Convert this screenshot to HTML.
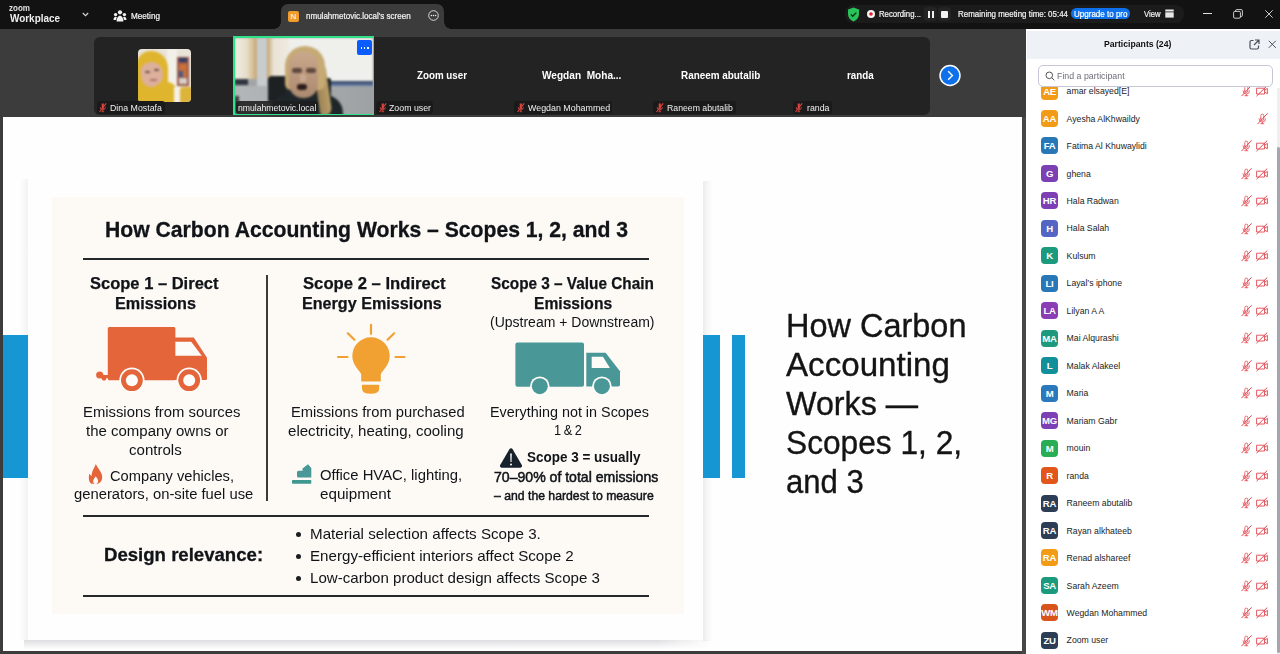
<!DOCTYPE html>
<html><head><meta charset="utf-8">
<style>
*{margin:0;padding:0;box-sizing:border-box}
html,body{width:1280px;height:654px;overflow:hidden;background:#3c3c3c;font-family:"Liberation Sans",sans-serif}
.a{position:absolute}
.nw{white-space:nowrap}
svg{position:absolute;overflow:visible}
#top{left:0;top:0;width:1280px;height:29px;background:#121212}
#strip{left:94px;top:37px;width:836px;height:78px;background:#232323;border-radius:6px}
#screen{left:3px;top:117px;width:1019px;height:534px;background:#fefefe}
#panel{left:1026px;top:29px;width:254px;height:625px;background:#fff}
.lbl{position:absolute;top:101px;height:13px;background:#1a1a1a;border-radius:3px}
.row{position:absolute;left:0;width:1280px;height:17px}
.av{position:absolute;left:1041px;top:0;width:17px;height:17px;border-radius:4px;color:#fff;font-size:9.6px;font-weight:700;text-align:center;line-height:17px;letter-spacing:-0.3px}
.nm{position:absolute;left:1066.6px;top:3.6px;font-size:8.7px;line-height:10px;color:#1c1c1c;white-space:nowrap}
.mic,.cam{top:2.7px}
.rule{position:absolute;background:#25282b;height:2px}
</style></head><body>
<svg width="0" height="0" style="position:absolute">
 <defs>
  <g id="micoff" fill="none" stroke="#e2474f" stroke-width="0.8" stroke-linecap="round">
    <path d="M3.8 6V2.6a1.5 1.5 0 0 1 3 0V6a1.5 1.5 0 0 1-3 0z"/>
    <path d="M2 5.8a3.3 3.3 0 0 0 6.6 0M5.3 9.2v1.5M3.8 10.7h3"/>
    <path d="M0.8 10.8L10.3 0.6" stroke-width="1"/>
  </g>
  <g id="camoff" fill="none" stroke="#e2474f" stroke-width="0.9" stroke-linecap="round" stroke-linejoin="round">
    <path d="M1 3.2h7.6v5.8H1z"/>
    <path d="M8.6 5.2l2.8-1.8v5.4l-2.8-1.8"/>
    <path d="M0.8 10.9L11 0.8" stroke-width="1"/>
  </g>
  <g id="smic" fill="#d9443f">
    <path d="M2.7 0.5h2.2v4.8a1.1 1.1 0 0 1-2.2 0z"/>
    <path d="M1.2 4.2a2.6 2.6 0 0 0 5.2 0" fill="none" stroke="#d9443f" stroke-width="0.9"/>
    <path d="M3.8 7.1v1.6M2.5 8.7h2.6" stroke="#d9443f" stroke-width="0.9"/>
    <path d="M0.5 9L7.2 0.3" stroke="#d9443f" stroke-width="1.1"/>
  </g>
 </defs>
</svg>

<!-- ================= TOP BAR ================= -->
<div id="top" class="a">
  <svg style="left:82px;top:12px" width="7" height="5"><path d="M0.8 1l2.7 2.7L6.2 1" fill="none" stroke="#d8d8d8" stroke-width="1.1"/></svg>
  <svg style="left:113px;top:9px" width="14" height="14" viewBox="0 0 14 14" fill="#f2f2f2">
    <circle cx="7" cy="3.3" r="2.1"/><circle cx="2.6" cy="5.6" r="1.7"/><circle cx="11.4" cy="5.6" r="1.7"/>
    <path d="M3.6 12.5c0-3.3 1.4-5.8 3.4-5.8s3.4 2.5 3.4 5.8z"/>
    <path d="M0.5 11c0-2 0.8-3.3 2.1-3.3 0.6 0 1 0.2 1.3 0.5-0.5 1-0.8 2-0.8 2.8z"/>
    <path d="M13.5 11c0-2-0.8-3.3-2.1-3.3-0.6 0-1 0.2-1.3 0.5 0.5 1 0.8 2 0.8 2.8z"/>
  </svg>
  <!-- tab -->
  <div class="a" style="left:281px;top:4px;width:163px;height:25px;background:#3c3c3c;border-radius:7px 7px 0 0"></div>
  <div class="a" style="left:274px;top:22px;width:7px;height:7px;background:radial-gradient(circle at 0 0,#121212 6.5px,#3c3c3c 7px)"></div>
  <div class="a" style="left:444px;top:22px;width:7px;height:7px;background:radial-gradient(circle at 100% 0,#121212 6.5px,#3c3c3c 7px)"></div>
  <div class="a" style="left:288px;top:11px;width:11px;height:11px;background:#f09e2a;border-radius:2px;color:#fff;font-size:8px;line-height:11px;text-align:center">N</div>
  <svg style="left:428px;top:10px" width="11" height="11" viewBox="0 0 11 11"><circle cx="5.5" cy="5.5" r="4.8" fill="none" stroke="#e8e8e8" stroke-width="0.9"/><circle cx="3.4" cy="5.6" r="0.75" fill="#eee"/><circle cx="5.5" cy="5.6" r="0.75" fill="#eee"/><circle cx="7.6" cy="5.6" r="0.75" fill="#eee"/></svg>
  <!-- right pill -->
  <div class="a" style="left:845px;top:5px;width:339px;height:18px;background:#1b1b1b;border-radius:8px"></div>
  <svg style="left:847px;top:7px" width="13" height="15" viewBox="0 0 13 15"><path d="M6.5 0.5L12 2.6v4.3c0 3.6-2.4 6.2-5.5 7.6C3.4 13.1 1 10.5 1 6.9V2.6z" fill="#27c25a"/><path d="M3.8 7.4l1.9 1.9 3.6-3.7" fill="none" stroke="#0f2a14" stroke-width="1.3"/></svg>
  <svg style="left:866px;top:9px" width="10" height="10" viewBox="0 0 10 10"><circle cx="5" cy="5" r="4" fill="#f4f4f4"/><circle cx="5" cy="5" r="1.8" fill="#e0242c"/></svg>
  <div class="a" style="left:924px;top:7px;width:13px;height:14px;background:#242424;border-radius:4px"></div>
  <div class="a" style="left:927.8px;top:10.6px;width:2px;height:7px;background:#f2f2f2"></div>
  <div class="a" style="left:931.6px;top:10.6px;width:2px;height:7px;background:#f2f2f2"></div>
  <div class="a" style="left:938px;top:7px;width:13px;height:14px;background:#242424;border-radius:4px"></div>
  <div class="a" style="left:940.5px;top:10.5px;width:7.5px;height:7.5px;background:#f2f2f2;border-radius:1px"></div>
  <div class="a" style="left:1071px;top:7.7px;width:59px;height:11.6px;background:#0e71eb;border-radius:6px"></div>
  <svg style="left:1165px;top:9px" width="9" height="9" viewBox="0 0 9 9" fill="#e8e8e8"><rect x="0.3" y="0.5" width="8.4" height="2"/><rect x="0.3" y="3.3" width="8.4" height="5.3"/></svg>
  <div class="a" style="left:1203px;top:13px;width:8.5px;height:1px;background:#e0e0e0"></div>
  <svg style="left:1233px;top:9px" width="10" height="10" viewBox="0 0 10 10" fill="none" stroke="#e0e0e0" stroke-width="0.9"><rect x="0.6" y="2.4" width="6.8" height="6.8" rx="1.2"/><path d="M2.5 2.4V1.8a1.2 1.2 0 0 1 1.2-1.2h4.5a1.2 1.2 0 0 1 1.2 1.2v4.5a1.2 1.2 0 0 1-1.2 1.2H7.4"/></svg>
  <svg style="left:1264.5px;top:9.5px" width="8" height="8" viewBox="0 0 8 8" fill="none" stroke="#e0e0e0" stroke-width="0.9"><path d="M0.3 0.3l7.4 7.4M7.7 0.3l-7.4 7.4"/></svg>
</div>

<!-- ================= STRIP ================= -->
<div id="strip" class="a"></div>
<!-- Dina photo -->
<div class="a" style="left:138px;top:49px;width:53px;height:53px;border-radius:4px;overflow:hidden;background:#e9e3d8">
 <div class="a" style="left:0;top:0;width:53px;height:53px;filter:blur(0.8px)">
  <div class="a" style="left:29px;top:0;width:10px;height:53px;background:#f3f0ea"></div>
  <div class="a" style="left:39px;top:8px;width:12px;height:29px;background:#9a5a48"></div>
  <div class="a" style="left:41px;top:9px;width:8px;height:4px;background:#2e3c6a"></div>
  <div class="a" style="left:41px;top:15px;width:8px;height:13px;background:#c8703c"></div>
  <div class="a" style="left:41px;top:22px;width:4px;height:6px;background:#4a5a8a"></div>
  <div class="a" style="left:41px;top:29px;width:8px;height:6px;background:#d8d0c8"></div>
  <div class="a" style="left:-2px;top:2px;width:32px;height:60px;background:#dfb52e;border-radius:15px 17px 2px 2px"></div>
  <div class="a" style="left:3px;top:13px;width:22px;height:25px;background:#dcb09a;border-radius:9px 11px 12px 10px;transform:rotate(-8deg)"></div>
  <div class="a" style="left:7px;top:22px;width:5px;height:2px;background:#6a5048;border-radius:1px"></div>
  <div class="a" style="left:16px;top:20px;width:5px;height:2px;background:#6a5048;border-radius:1px"></div>
  <div class="a" style="left:12px;top:30px;width:7px;height:2px;background:#b0706a;border-radius:1px"></div>
  <div class="a" style="left:14px;top:33px;width:26px;height:24px;background:#dfb52e;border-radius:14px 12px 0 0;transform:rotate(-12deg)"></div>
  <div class="a" style="left:36px;top:38px;width:8px;height:16px;background:#f4f1ea"></div>
  <div class="a" style="left:42px;top:38px;width:12px;height:16px;background:#dcb43a;border-radius:3px 0 0 0"></div>
 </div>
</div>
<div class="lbl" style="left:97px;width:68px"></div>
<svg style="left:99px;top:102.5px" width="8" height="10" viewBox="0 0 8 10"><use href="#smic"/></svg>
<!-- Active speaker video -->
<div class="a" style="left:233px;top:36px;width:141px;height:79px;background:#2fe28a"></div>
<div class="a" style="left:234.5px;top:37.5px;width:138px;height:76px;overflow:hidden;background:#a2a5a7">
 <div class="a" style="left:0;top:0;width:138px;height:76px;filter:blur(0.9px)">
  <div class="a" style="left:54px;top:0;width:84px;height:44px;background:#efefec"></div>
  <div class="a" style="left:0;top:0;width:22px;height:41px;background:linear-gradient(90deg,#f1ede4,#e6dcc8 55%,#c6a872)"></div>
  <div class="a" style="left:22px;top:0;width:10px;height:48px;background:#c9cccd"></div>
  <div class="a" style="left:32px;top:0;width:22px;height:41px;background:linear-gradient(90deg,#c3a26c,#e9e3d6 30%,#efebe2)"></div>
  <div class="a" style="left:0;top:41px;width:13px;height:6px;background:#2f3540"></div>
  <div class="a" style="left:95px;top:43px;width:43px;height:6px;background:linear-gradient(180deg,#33405a,#6f8fbf)"></div>
  <div class="a" style="left:0;top:48px;width:138px;height:28px;background:linear-gradient(90deg,#b4b7b9,#9ea1a3)"></div>
  <div class="a" style="left:0;top:58px;width:4px;height:18px;background:#3a3d40"></div>
  <div class="a" style="left:33px;top:38px;width:21px;height:26px;background:#1d2123;border-radius:4px 2px 0 0"></div>
  <div class="a" style="left:89px;top:40px;width:7px;height:22px;background:#1d2123;border-radius:2px"></div>
  <div class="a" style="left:34px;top:57px;width:74px;height:22px;background:#1f262a;border-radius:18px 18px 0 0"></div>
  <div class="a" style="left:50px;top:48px;width:40px;height:14px;background:#1f262a"></div>
  <div class="a" style="left:82px;top:28px;width:12px;height:50px;background:linear-gradient(90deg,#9c8256,#bca068);border-radius:8px 4px 10px 6px;transform:rotate(-8deg)"></div>
  <div class="a" style="left:50px;top:8px;width:40px;height:44px;background:#c6aa74;border-radius:20px 20px 6px 6px"></div>
  <div class="a" style="left:54px;top:14px;width:29px;height:46px;background:linear-gradient(180deg,#c8a88c,#b8957a 60%,#a98a70);border-radius:13px 12px 14px 14px"></div>
  <div class="a" style="left:57px;top:30px;width:10px;height:5px;background:#4e3a32;border-radius:3px;opacity:.85"></div>
  <div class="a" style="left:71px;top:30px;width:10px;height:5px;background:#4e3a32;border-radius:3px;opacity:.85"></div>
  <div class="a" style="left:65px;top:36px;width:6px;height:8px;background:#c9a98e;border-radius:3px"></div>
  <div class="a" style="left:62px;top:46px;width:10px;height:6px;background:#2c1c1a;border-radius:5px"></div>
 </div>
</div>
<div class="a" style="left:357px;top:40px;width:15px;height:15px;background:#0b5cff;border-radius:2px"></div>
<div class="a" style="left:360.5px;top:47px;width:1.5px;height:1.5px;background:#fff"></div>
<div class="a" style="left:363.8px;top:47px;width:1.5px;height:1.5px;background:#fff"></div>
<div class="a" style="left:367px;top:47px;width:1.5px;height:1.5px;background:#fff"></div>
<div class="lbl" style="left:236px;width:82px;background:rgba(30,30,30,0.88)"></div>
<!-- other labels -->
<div class="lbl" style="left:376px;width:57px"></div>
<svg style="left:378.5px;top:102.5px" width="8" height="10" viewBox="0 0 8 10"><use href="#smic"/></svg>
<div class="lbl" style="left:514.4px;width:98px"></div>
<svg style="left:517px;top:102.5px" width="8" height="10" viewBox="0 0 8 10"><use href="#smic"/></svg>
<div class="lbl" style="left:653px;width:83px"></div>
<svg style="left:655.5px;top:102.5px" width="8" height="10" viewBox="0 0 8 10"><use href="#smic"/></svg>
<div class="lbl" style="left:792.5px;width:39px"></div>
<svg style="left:795px;top:102.5px" width="8" height="10" viewBox="0 0 8 10"><use href="#smic"/></svg>
<!-- arrow -->
<svg style="left:938px;top:64px" width="24" height="24" viewBox="0 0 24 24"><circle cx="12" cy="11.5" r="10.7" fill="#fff"/><circle cx="12" cy="11.5" r="9.2" fill="#0e71eb"/><path d="M10.2 7.3l4.2 4.2-4.2 4.2" fill="none" stroke="#fff" stroke-width="1.4"/></svg>

<!-- ================= SHARED SCREEN ================= -->
<div id="screen" class="a"></div>
<div class="a" style="left:1022px;top:117px;width:4px;height:537px;background:#474747"></div>
<!-- card -->
<div class="a" style="left:20px;top:179px;width:8px;height:461px;background:linear-gradient(90deg,#fdfdfe,#f3f3f5)"></div>
<div class="a" style="left:703px;top:181px;width:9px;height:460px;background:linear-gradient(90deg,#ececee,#f6f6f7 50%,#fdfdfd)"></div>
<div class="a" style="left:24px;top:640px;width:688px;height:9px;background:linear-gradient(180deg,#dedee0,#ececee 45%,#f8f8f9 85%,#fefefe);-webkit-mask-image:linear-gradient(90deg,#000 92%,transparent)"></div>
<div class="a" style="left:28px;top:179px;width:675px;height:461px;background:#fefefe"></div>
<div class="a" style="left:52px;top:197px;width:632px;height:417px;background:#fdfaf6"></div>
<!-- blue bars -->
<div class="a" style="left:3px;top:335px;width:25px;height:143px;background:#1796d4"></div>
<div class="a" style="left:703px;top:335px;width:16.5px;height:143px;background:#1796d4"></div>
<div class="a" style="left:732px;top:335px;width:13px;height:143px;background:#1796d4"></div>
<div class="rule" style="left:83px;top:258px;width:566px"></div>
<div class="rule" style="left:83px;top:515px;width:566px"></div>
<div class="rule" style="left:83px;top:595px;width:566px"></div>
<div class="a" style="left:266.2px;top:275px;width:1.8px;height:226px;background:#3a3a3a"></div>
<!-- truck 1 -->
<svg style="left:90px;top:320px" width="125" height="75" viewBox="0 0 125 75">
  <rect x="17.8" y="7.1" width="67.6" height="53.1" rx="1.5" fill="#e4653a"/>
  <path d="M84.6 17.4H103.8L117 37.8V58.5a1.5 1.5 0 0 1-1.5 1.5H84.6z" fill="#e4653a"/>
  <path d="M85.4 21.8H101.2L111.8 35.8H85.4z" fill="#fefcf9"/>
  <path d="M9 56.5H20" stroke="#e4653a" stroke-width="3"/>
  <circle cx="9.7" cy="55" r="3.6" fill="#e4653a"/>
  <circle cx="14" cy="58.3" r="2.4" fill="#e4653a"/>
  <circle cx="41.9" cy="60.2" r="12.6" fill="#fefcf9"/>
  <circle cx="41.9" cy="60.2" r="10.9" fill="#e4653a"/>
  <circle cx="41.9" cy="60.2" r="6" fill="#fefcf9"/>
  <circle cx="99.2" cy="60.2" r="12.6" fill="#fefcf9"/>
  <circle cx="99.2" cy="60.2" r="10.9" fill="#e4653a"/>
  <circle cx="99.2" cy="60.2" r="6" fill="#fefcf9"/>
</svg>
<!-- bulb -->
<svg style="left:330px;top:318px" width="80" height="80" viewBox="0 0 80 80">
  <path d="M22.3 38A18.7 18.7 0 1 1 59.7 38C59.7 46 54 51 50.8 56V63.6H31.2V56C28 51 22.3 46 22.3 38z" fill="#f0a132"/>
  <path d="M32 66.7H49.2V70.5Q49.2 75.8 40.6 75.8Q32 75.8 32 70.5z" fill="#f0a132"/>
  <g stroke="#f0a132" stroke-width="2.2" stroke-linecap="round"><path d="M41 6.8V15.8M17.8 15.3L24.4 21.8M64.2 15.3L57.6 21.8M8 39H17.5M65.5 39H74.5"/></g>
</svg>
<!-- truck 3 -->
<svg style="left:505px;top:330px" width="125" height="70" viewBox="0 0 125 70">
  <rect x="10.4" y="12.6" width="68.6" height="44.1" rx="2" fill="#4a9797"/>
  <path d="M81.3 22.7H100.6L115 41.2V54.5a2 2 0 0 1-2 2H81.3z" fill="#4a9797"/>
  <path d="M86.7 26.8H98L104.9 38H86.7z" fill="#fefcf9"/>
  <circle cx="34.8" cy="56.2" r="9.8" fill="#fefcf9"/><circle cx="34.8" cy="56.2" r="8" fill="#4a9797"/>
  <circle cx="96.9" cy="56.2" r="9.8" fill="#fefcf9"/><circle cx="96.9" cy="56.2" r="8" fill="#4a9797"/>
</svg>
<!-- flame -->
<svg style="left:80px;top:455px" width="40" height="40" viewBox="0 0 40 40">
  <path d="M15.8 8.9C17.5 13 20.5 15.5 21.8 19.5C23 23.5 21.5 27.5 18 28.7C13.5 28.9 10.5 28.9 11.5 28.7C8.5 27 8.5 23 9.3 18.5C10.3 20 11 20.8 11.6 21C11.5 16.5 14 13.5 15.8 8.9z" fill="#e4653a"/>
  <path d="M15.6 21.5C17.3 23 18.5 25 18 27C17.5 28.6 16.2 29 15.6 29C14.5 29 13.3 28.4 13.2 26.8C13 24.8 14.5 23 15.6 21.5z" fill="#fefcf9"/>
</svg>
<!-- hvac -->
<svg style="left:285px;top:455px" width="40" height="40" viewBox="0 0 40 40">
  <path d="M12 17.2a1.5 1.5 0 0 1 1.5-1.5H17.5V13.5L23 9.2L26.3 13V22.6H13.5a1.5 1.5 0 0 1-1.5-1.5z" fill="#4a9797"/>
  <rect x="7" y="25" width="19.3" height="3.7" rx="0.8" fill="#3f9890"/>
</svg>
<!-- warning -->
<svg style="left:490px;top:440px" width="40" height="40" viewBox="0 0 40 40">
  <path d="M19.4 9.2a1.9 1.9 0 0 1 3.2 0L31.8 25a1.9 1.9 0 0 1-1.6 2.8H11.8A1.9 1.9 0 0 1 10.2 25z" fill="#17212b"/>
  <path d="M20.2 13.5H21.8L21.5 22H20.5z" fill="#fff"/><circle cx="21" cy="24.4" r="1" fill="#fff"/>
</svg>
<!-- bullets -->
<div class="a" style="left:295.5px;top:531.8px;width:5px;height:5px;border-radius:50%;background:#1a1e22"></div>
<div class="a" style="left:295.5px;top:553.6px;width:5px;height:5px;border-radius:50%;background:#1a1e22"></div>
<div class="a" style="left:295.5px;top:575.6px;width:5px;height:5px;border-radius:50%;background:#1a1e22"></div>

<!-- ================= PANEL ================= -->
<div id="panel" class="a"></div>
<div class="a" style="left:1027px;top:31px;width:253px;height:28px;background:#eef2f6"></div>
<svg style="left:1249px;top:38.5px" width="11" height="11" viewBox="0 0 11 11" fill="none" stroke="#4b505c" stroke-width="1.2"><path d="M4.5 1.5H2.5a1.5 1.5 0 0 0-1.5 1.5v5.5a1.5 1.5 0 0 0 1.5 1.5H8a1.5 1.5 0 0 0 1.5-1.5V6.5M6 1H10V5M10 1L5 6"/></svg>
<svg style="left:1268px;top:40px" width="9" height="9" viewBox="0 0 9 9" fill="none" stroke="#4b505c" stroke-width="1"><path d="M0.8 0.8l7 7M7.8 0.8l-7 7"/></svg>
<div class="a" style="left:1277px;top:88px;width:3px;height:566px;background:#efefef"></div>
<div class="a" style="left:1277px;top:147px;width:3px;height:506px;background:#a6a6ae;border-radius:2px"></div>
<div class="a" style="left:0;top:87px;width:1276px;height:567px;overflow:hidden">
 <div class="a" style="left:0;top:-87px;width:1280px;height:654px">
<div class='row a' style='top:82.50px'><div class='av' style='background:#f29b17'>AE</div><div class='nm'>amar elsayed[E]</div><svg class='mic' style='left:1241px' width='11' height='12' viewBox='0 0 11 12'><use href='#micoff'/></svg><svg class='cam' style='left:1256px' width='13' height='12' viewBox='0 0 13 12'><use href='#camoff'/></svg></div>
<div class='row a' style='top:109.97px'><div class='av' style='background:#f29b17'>AA</div><div class='nm'>Ayesha AlKhwaildy</div><svg class='mic' style='left:1257px' width='12' height='12' viewBox='0 0 12 12'><use href='#micoff'/></svg></div>
<div class='row a' style='top:137.44px'><div class='av' style='background:#2878b8'>FA</div><div class='nm'>Fatima Al Khuwaylidi</div><svg class='mic' style='left:1241px' width='11' height='12' viewBox='0 0 11 12'><use href='#micoff'/></svg><svg class='cam' style='left:1256px' width='13' height='12' viewBox='0 0 13 12'><use href='#camoff'/></svg></div>
<div class='row a' style='top:164.91px'><div class='av' style='background:#7c3fb4'>G</div><div class='nm'>ghena</div><svg class='mic' style='left:1241px' width='11' height='12' viewBox='0 0 11 12'><use href='#micoff'/></svg><svg class='cam' style='left:1256px' width='13' height='12' viewBox='0 0 13 12'><use href='#camoff'/></svg></div>
<div class='row a' style='top:192.38px'><div class='av' style='background:#7c3fb4'>HR</div><div class='nm'>Hala Radwan</div><svg class='mic' style='left:1241px' width='11' height='12' viewBox='0 0 11 12'><use href='#micoff'/></svg><svg class='cam' style='left:1256px' width='13' height='12' viewBox='0 0 13 12'><use href='#camoff'/></svg></div>
<div class='row a' style='top:219.85px'><div class='av' style='background:#5466c4'>H</div><div class='nm'>Hala Salah</div><svg class='mic' style='left:1241px' width='11' height='12' viewBox='0 0 11 12'><use href='#micoff'/></svg><svg class='cam' style='left:1256px' width='13' height='12' viewBox='0 0 13 12'><use href='#camoff'/></svg></div>
<div class='row a' style='top:247.32px'><div class='av' style='background:#1b9a7d'>K</div><div class='nm'>Kulsum</div><svg class='mic' style='left:1241px' width='11' height='12' viewBox='0 0 11 12'><use href='#micoff'/></svg><svg class='cam' style='left:1256px' width='13' height='12' viewBox='0 0 13 12'><use href='#camoff'/></svg></div>
<div class='row a' style='top:274.79px'><div class='av' style='background:#2878b8'>LI</div><div class='nm'>Layal’s iphone</div><svg class='mic' style='left:1241px' width='11' height='12' viewBox='0 0 11 12'><use href='#micoff'/></svg><svg class='cam' style='left:1256px' width='13' height='12' viewBox='0 0 13 12'><use href='#camoff'/></svg></div>
<div class='row a' style='top:302.26px'><div class='av' style='background:#8b3db5'>LA</div><div class='nm'>Lilyan A A</div><svg class='mic' style='left:1241px' width='11' height='12' viewBox='0 0 11 12'><use href='#micoff'/></svg><svg class='cam' style='left:1256px' width='13' height='12' viewBox='0 0 13 12'><use href='#camoff'/></svg></div>
<div class='row a' style='top:329.73px'><div class='av' style='background:#1d9a7d'>MA</div><div class='nm'>Mai Alqurashi</div><svg class='mic' style='left:1241px' width='11' height='12' viewBox='0 0 11 12'><use href='#micoff'/></svg><svg class='cam' style='left:1256px' width='13' height='12' viewBox='0 0 13 12'><use href='#camoff'/></svg></div>
<div class='row a' style='top:357.20px'><div class='av' style='background:#12909a'>L</div><div class='nm'>Malak Alakeel</div><svg class='mic' style='left:1241px' width='11' height='12' viewBox='0 0 11 12'><use href='#micoff'/></svg><svg class='cam' style='left:1256px' width='13' height='12' viewBox='0 0 13 12'><use href='#camoff'/></svg></div>
<div class='row a' style='top:384.67px'><div class='av' style='background:#2b79bd'>M</div><div class='nm'>Maria</div><svg class='mic' style='left:1241px' width='11' height='12' viewBox='0 0 11 12'><use href='#micoff'/></svg><svg class='cam' style='left:1256px' width='13' height='12' viewBox='0 0 13 12'><use href='#camoff'/></svg></div>
<div class='row a' style='top:412.14px'><div class='av' style='background:#7c3fb4'>MG</div><div class='nm'>Mariam Gabr</div><svg class='mic' style='left:1241px' width='11' height='12' viewBox='0 0 11 12'><use href='#micoff'/></svg><svg class='cam' style='left:1256px' width='13' height='12' viewBox='0 0 13 12'><use href='#camoff'/></svg></div>
<div class='row a' style='top:439.61px'><div class='av' style='background:#28ad55'>M</div><div class='nm'>mouin</div><svg class='mic' style='left:1241px' width='11' height='12' viewBox='0 0 11 12'><use href='#micoff'/></svg><svg class='cam' style='left:1256px' width='13' height='12' viewBox='0 0 13 12'><use href='#camoff'/></svg></div>
<div class='row a' style='top:467.08px'><div class='av' style='background:#e2561b'>R</div><div class='nm'>randa</div><svg class='mic' style='left:1241px' width='11' height='12' viewBox='0 0 11 12'><use href='#micoff'/></svg><svg class='cam' style='left:1256px' width='13' height='12' viewBox='0 0 13 12'><use href='#camoff'/></svg></div>
<div class='row a' style='top:494.55px'><div class='av' style='background:#2c3d55'>RA</div><div class='nm'>Raneem abutalib</div><svg class='mic' style='left:1241px' width='11' height='12' viewBox='0 0 11 12'><use href='#micoff'/></svg><svg class='cam' style='left:1256px' width='13' height='12' viewBox='0 0 13 12'><use href='#camoff'/></svg></div>
<div class='row a' style='top:522.02px'><div class='av' style='background:#2c3d55'>RA</div><div class='nm'>Rayan alkhateeb</div><svg class='mic' style='left:1241px' width='11' height='12' viewBox='0 0 11 12'><use href='#micoff'/></svg><svg class='cam' style='left:1256px' width='13' height='12' viewBox='0 0 13 12'><use href='#camoff'/></svg></div>
<div class='row a' style='top:549.49px'><div class='av' style='background:#f29b17'>RA</div><div class='nm'>Renad alshareef</div><svg class='mic' style='left:1241px' width='11' height='12' viewBox='0 0 11 12'><use href='#micoff'/></svg><svg class='cam' style='left:1256px' width='13' height='12' viewBox='0 0 13 12'><use href='#camoff'/></svg></div>
<div class='row a' style='top:576.96px'><div class='av' style='background:#1b9a7d'>SA</div><div class='nm'>Sarah Azeem</div><svg class='mic' style='left:1241px' width='11' height='12' viewBox='0 0 11 12'><use href='#micoff'/></svg><svg class='cam' style='left:1256px' width='13' height='12' viewBox='0 0 13 12'><use href='#camoff'/></svg></div>
<div class='row a' style='top:604.43px'><div class='av' style='background:#d9541a'>WM</div><div class='nm'>Wegdan Mohammed</div><svg class='mic' style='left:1241px' width='11' height='12' viewBox='0 0 11 12'><use href='#micoff'/></svg><svg class='cam' style='left:1256px' width='13' height='12' viewBox='0 0 13 12'><use href='#camoff'/></svg></div>
<div class='row a' style='top:631.90px'><div class='av' style='background:#2c3d55'>ZU</div><div class='nm'>Zoom user</div><svg class='mic' style='left:1241px' width='11' height='12' viewBox='0 0 11 12'><use href='#micoff'/></svg><svg class='cam' style='left:1256px' width='13' height='12' viewBox='0 0 13 12'><use href='#camoff'/></svg></div>
 </div>
</div>
<div class="a" style="left:1038px;top:65px;width:235px;height:22px;border:1px solid #c6c6d6;border-radius:5px;background:#fff"></div>
<svg style="left:1045px;top:71px" width="10" height="10" viewBox="0 0 10 10" fill="none" stroke="#555" stroke-width="1"><circle cx="4.3" cy="4.3" r="3.3"/><path d="M6.7 6.7L9.3 9.3"/></svg>

<div class='a nw' style="left:104.90px;top:218.58px;font-size:22px;font-weight:700;color:#101317;line-height:22px;transform:scaleX(0.9616);transform-origin:0 0;-webkit-text-stroke:0.3px #101317;">How Carbon Accounting Works – Scopes 1, 2, and 3</div>
<div class='a nw' style="left:90.20px;top:275.76px;font-size:16px;font-weight:700;color:#101317;line-height:16px;transform:scaleX(1.0321);transform-origin:0 0;-webkit-text-stroke:0.25px #101317;">Scope 1 – Direct</div>
<div class='a nw' style="left:114.50px;top:296.16px;font-size:16px;font-weight:700;color:#101317;line-height:16px;transform:scaleX(1.0121);transform-origin:0 0;-webkit-text-stroke:0.25px #101317;">Emissions</div>
<div class='a nw' style="left:302.70px;top:275.66px;font-size:16px;font-weight:700;color:#101317;line-height:16px;transform:scaleX(1.0414);transform-origin:0 0;-webkit-text-stroke:0.25px #101317;">Scope 2 – Indirect</div>
<div class='a nw' style="left:301.90px;top:296.21px;font-size:16px;font-weight:700;color:#101317;line-height:16px;transform:scaleX(1.0078);transform-origin:0 0;-webkit-text-stroke:0.25px #101317;">Energy Emissions</div>
<div class='a nw' style="left:490.60px;top:275.66px;font-size:16px;font-weight:700;color:#101317;line-height:16px;transform:scaleX(0.9585);transform-origin:0 0;-webkit-text-stroke:0.25px #101317;">Scope 3 – Value Chain</div>
<div class='a nw' style="left:533.90px;top:296.21px;font-size:16px;font-weight:700;color:#101317;line-height:16px;transform:scaleX(0.9759);transform-origin:0 0;-webkit-text-stroke:0.25px #101317;">Emissions</div>
<div class='a nw' style="left:490.20px;top:315.15px;font-size:14px;font-weight:400;color:#101317;line-height:14px;transform:scaleX(0.9997);transform-origin:0 0;">(Upstream + Downstream)</div>
<div class='a nw' style="left:82.60px;top:405.35px;font-size:14px;font-weight:400;color:#101317;line-height:14px;transform:scaleX(1.0593);transform-origin:0 0;">Emissions from sources</div>
<div class='a nw' style="left:85.50px;top:424.35px;font-size:14px;font-weight:400;color:#101317;line-height:14px;transform:scaleX(1.0708);transform-origin:0 0;">the company owns or</div>
<div class='a nw' style="left:128.50px;top:442.75px;font-size:14px;font-weight:400;color:#101317;line-height:14px;transform:scaleX(1.0748);transform-origin:0 0;">controls</div>
<div class='a nw' style="left:109.50px;top:468.65px;font-size:14px;font-weight:400;color:#101317;line-height:14px;transform:scaleX(1.0483);transform-origin:0 0;">Company vehicles,</div>
<div class='a nw' style="left:74.00px;top:487.15px;font-size:14px;font-weight:400;color:#101317;line-height:14px;transform:scaleX(1.0568);transform-origin:0 0;">generators, on-site fuel use</div>
<div class='a nw' style="left:291.40px;top:405.05px;font-size:14px;font-weight:400;color:#101317;line-height:14px;transform:scaleX(1.0524);transform-origin:0 0;">Emissions from purchased</div>
<div class='a nw' style="left:287.60px;top:423.55px;font-size:14px;font-weight:400;color:#101317;line-height:14px;transform:scaleX(1.0768);transform-origin:0 0;">electricity, heating, cooling</div>
<div class='a nw' style="left:319.50px;top:468.15px;font-size:14px;font-weight:400;color:#101317;line-height:14px;transform:scaleX(1.0605);transform-origin:0 0;">Office HVAC, lighting,</div>
<div class='a nw' style="left:319.50px;top:486.55px;font-size:14px;font-weight:400;color:#101317;line-height:14px;transform:scaleX(1.0858);transform-origin:0 0;">equipment</div>
<div class='a nw' style="left:490.00px;top:405.05px;font-size:14px;font-weight:400;color:#101317;line-height:14px;transform:scaleX(1.0266);transform-origin:0 0;">Everything not in Scopes</div>
<div class='a nw' style="left:554.00px;top:423.05px;font-size:14px;font-weight:400;color:#101317;line-height:14px;transform:scaleX(0.9110);transform-origin:0 0;">1&thinsp;&amp;&thinsp;2</div>
<div class='a nw' style="left:527.10px;top:450.45px;font-size:14px;font-weight:700;color:#101317;line-height:14px;transform:scaleX(0.9628);transform-origin:0 0;">Scope 3 = usually</div>
<div class='a nw' style="left:494.30px;top:470.48px;font-size:14.2px;font-weight:400;color:#101317;line-height:14.2px;transform:scaleX(0.9920);transform-origin:0 0;-webkit-text-stroke:0.5px #101317;">70–90% of total emissions</div>
<div class='a nw' style="left:494.30px;top:489.69px;font-size:12.3px;font-weight:400;color:#101317;line-height:12.3px;transform:scaleX(0.9940);transform-origin:0 0;-webkit-text-stroke:0.45px #101317;">– and the hardest to measure</div>
<div class='a nw' style="left:103.50px;top:545.12px;font-size:19px;font-weight:700;color:#101317;line-height:19px;transform:scaleX(0.9782);transform-origin:0 0;-webkit-text-stroke:0.3px #101317;">Design relevance:</div>
<div class='a nw' style="left:310.20px;top:527.43px;font-size:14.5px;font-weight:400;color:#101317;line-height:14.5px;transform:scaleX(1.0463);transform-origin:0 0;">Material selection affects Scope 3.</div>
<div class='a nw' style="left:310.20px;top:549.43px;font-size:14.5px;font-weight:400;color:#101317;line-height:14.5px;transform:scaleX(1.0442);transform-origin:0 0;">Energy-efficient interiors affect Scope 2</div>
<div class='a nw' style="left:310.20px;top:571.23px;font-size:14.5px;font-weight:400;color:#101317;line-height:14.5px;transform:scaleX(1.0404);transform-origin:0 0;">Low-carbon product design affects Scope 3</div>
<div class='a nw' style="left:785.60px;top:310.29px;font-size:32.5px;font-weight:400;color:#141414;line-height:32.5px;transform:scaleX(0.9992);transform-origin:0 0;-webkit-text-stroke:0.35px #141414;">How Carbon</div>
<div class='a nw' style="left:785.60px;top:349.29px;font-size:32.5px;font-weight:400;color:#141414;line-height:32.5px;transform:scaleX(1.0198);transform-origin:0 0;-webkit-text-stroke:0.35px #141414;">Accounting</div>
<div class='a nw' style="left:785.60px;top:388.29px;font-size:32.5px;font-weight:400;color:#141414;line-height:32.5px;transform:scaleX(0.9931);transform-origin:0 0;-webkit-text-stroke:0.35px #141414;">Works —</div>
<div class='a nw' style="left:785.60px;top:427.29px;font-size:32.5px;font-weight:400;color:#141414;line-height:32.5px;transform:scaleX(0.9747);transform-origin:0 0;-webkit-text-stroke:0.35px #141414;">Scopes 1, 2,</div>
<div class='a nw' style="left:785.60px;top:466.29px;font-size:32.5px;font-weight:400;color:#141414;line-height:32.5px;transform:scaleX(0.9564);transform-origin:0 0;-webkit-text-stroke:0.35px #141414;">and 3</div>
<div class='a nw' style="left:9.70px;top:14.04px;font-size:10px;font-weight:700;color:#f0f0f0;line-height:10px;transform:scaleX(0.9922);transform-origin:0 0;">Workplace</div>
<div class='a nw' style="left:9.00px;top:4.32px;font-size:8.6px;font-weight:700;color:#e0e0e0;line-height:8.6px;transform:scaleX(0.9359);transform-origin:0 0;">zoom</div>
<div class='a nw' style="left:131.20px;top:12.02px;font-size:8.6px;font-weight:400;color:#f4f4f4;line-height:8.6px;transform:scaleX(0.9484);transform-origin:0 0;-webkit-text-stroke:0.2px #f4f4f4;">Meeting</div>
<div class='a nw' style="left:305.60px;top:11.52px;font-size:8.6px;font-weight:400;color:#f4f4f4;line-height:8.6px;transform:scaleX(0.9341);transform-origin:0 0;-webkit-text-stroke:0.2px #f4f4f4;">nmulahmetovic.local's screen</div>
<div class='a nw' style="left:879.00px;top:9.72px;font-size:8.6px;font-weight:400;color:#f4f4f4;line-height:8.6px;transform:scaleX(0.9063);transform-origin:0 0;-webkit-text-stroke:0.2px #f4f4f4;">Recording...</div>
<div class='a nw' style="left:958.00px;top:9.72px;font-size:8.6px;font-weight:400;color:#f4f4f4;line-height:8.6px;transform:scaleX(0.9247);transform-origin:0 0;-webkit-text-stroke:0.2px #f4f4f4;">Remaining meeting time: 05:44</div>
<div class='a nw' style="left:1074.00px;top:9.72px;font-size:8.6px;font-weight:400;color:#ffffff;line-height:8.6px;transform:scaleX(0.9332);transform-origin:0 0;-webkit-text-stroke:0.2px #fff;">Upgrade to pro</div>
<div class='a nw' style="left:1143.50px;top:9.72px;font-size:8.6px;font-weight:400;color:#f4f4f4;line-height:8.6px;transform:scaleX(0.8926);transform-origin:0 0;-webkit-text-stroke:0.2px #f4f4f4;">View</div>
<div class='a nw' style="left:417.00px;top:71.28px;font-size:10.3px;font-weight:700;color:#ffffff;line-height:10.3px;transform:scaleX(0.9498);transform-origin:0 0;">Zoom user</div>
<div class='a nw' style="left:541.70px;top:71.28px;font-size:10.3px;font-weight:700;color:#ffffff;line-height:10.3px;transform:scaleX(0.9797);transform-origin:0 0;">Wegdan&nbsp;&nbsp;Moha...</div>
<div class='a nw' style="left:681.20px;top:71.28px;font-size:10.3px;font-weight:700;color:#ffffff;line-height:10.3px;transform:scaleX(0.9611);transform-origin:0 0;">Raneem abutalib</div>
<div class='a nw' style="left:846.60px;top:71.28px;font-size:10.3px;font-weight:700;color:#ffffff;line-height:10.3px;transform:scaleX(0.9520);transform-origin:0 0;">randa</div>
<div class='a nw' style="left:110.40px;top:103.62px;font-size:8.6px;font-weight:400;color:#f0f0f0;line-height:8.6px;transform:scaleX(1.0249);transform-origin:0 0;">Dina Mostafa</div>
<div class='a nw' style="left:237.70px;top:103.62px;font-size:8.6px;font-weight:400;color:#f0f0f0;line-height:8.6px;transform:scaleX(1.0057);transform-origin:0 0;">nmulahmetovic.local</div>
<div class='a nw' style="left:388.60px;top:103.62px;font-size:8.6px;font-weight:400;color:#f0f0f0;line-height:8.6px;transform:scaleX(1.0224);transform-origin:0 0;">Zoom user</div>
<div class='a nw' style="left:528.00px;top:103.62px;font-size:8.6px;font-weight:400;color:#f0f0f0;line-height:8.6px;transform:scaleX(1.0323);transform-origin:0 0;">Wegdan Mohammed</div>
<div class='a nw' style="left:667.20px;top:103.62px;font-size:8.6px;font-weight:400;color:#f0f0f0;line-height:8.6px;transform:scaleX(1.0141);transform-origin:0 0;">Raneem abutalib</div>
<div class='a nw' style="left:806.50px;top:103.62px;font-size:8.6px;font-weight:400;color:#f0f0f0;line-height:8.6px;transform:scaleX(1.0235);transform-origin:0 0;">randa</div>
<div class='a nw' style="left:1104.00px;top:39.98px;font-size:9px;font-weight:700;color:#0e0e0e;line-height:9px;transform:scaleX(0.9624);transform-origin:0 0;">Participants (24)</div>
<div class='a nw' style="left:1057.00px;top:71.72px;font-size:8.6px;font-weight:400;color:#6e6e78;line-height:8.6px;transform:scaleX(1.0255);transform-origin:0 0;">Find a participant</div>
</body></html>
